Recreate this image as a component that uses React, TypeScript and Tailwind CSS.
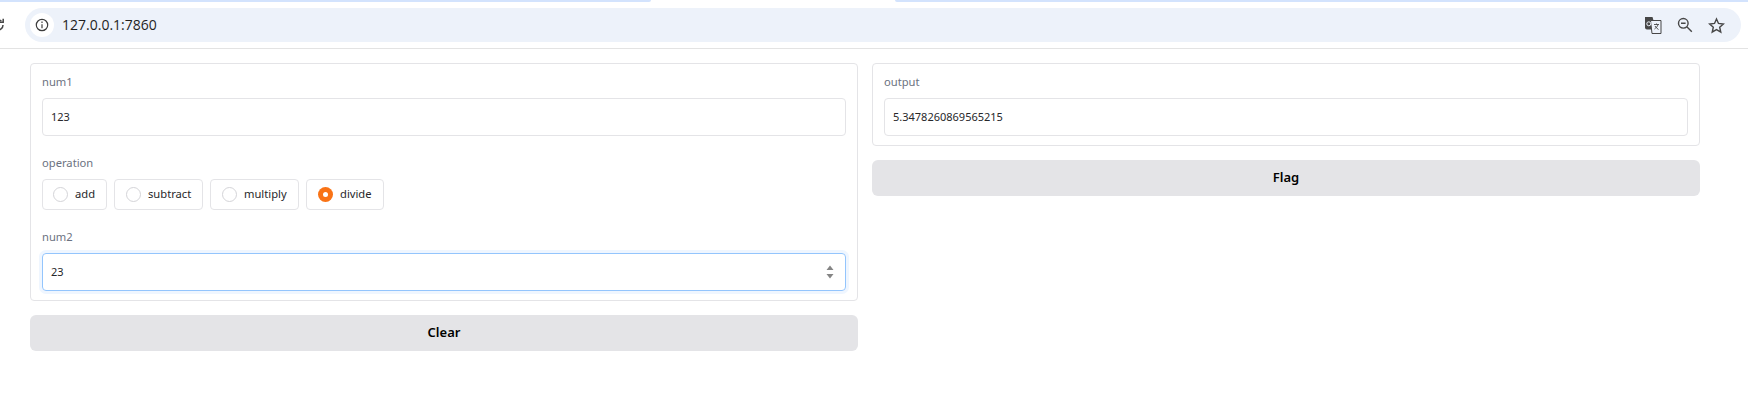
import React from "react";

const font = { fontFamily: '"Noto Sans", sans-serif' };

function Field({ label, value }: { label: string; value: string }) {
  return (
    <div className="flex flex-col">
      <div className="h-[24px] text-[11.2px] leading-[16px] text-[#6b7280]">{label}</div>
      <div className="flex h-[38px] items-center rounded-[4px] border border-[#e4e4e7] pl-[8px] pr-[9px] text-[11px] text-[#27272a]">{value}</div>
    </div>
  );
}

function Radio({ label, checked, w, pl }: { label: string; checked?: boolean; w: string; pl: string }) {
  return (
    <div className={`flex h-[31px] items-center rounded-[4px] border border-[#e4e4e7] text-[11.200px] text-[#27272a] ${w} ${pl}`}>
      {checked ? (
        <span className="flex h-[15px] w-[15px] items-center justify-center rounded-full bg-[#f97316]">
          <span className="h-[5px] w-[5px] rounded-full bg-white" />
        </span>
      ) : (
        <span className="h-[15px] w-[15px] rounded-full border border-[#d4d4d8] bg-white" />
      )}
      <span className="ml-[7px]">{label}</span>
    </div>
  );
}

function Btn({ label }: { label: string }) {
  return (
    <div className="flex h-[36px] items-center justify-center rounded-[6px] bg-[#e4e4e7] text-[13px] font-semibold text-black">{label}</div>
  );
}

export default function App() {
  return (
    <div className="h-[409px] w-[1748px] overflow-hidden bg-white" style={font}>
      <div className="h-[49px] border-b border-[#e3e3e3]">
        <div className="flex h-[2px]">
          <div className="w-[651px] rounded-br-[4px] bg-[#d3e3fd]" />
          <div className="w-[244px]" />
          <div className="flex-1 rounded-bl-[4px] bg-[#d3e3fd]" />
        </div>
        <div className="mt-[6px] flex h-[34px]">
          <div className="flex w-[25px] items-center">
            <svg width="16" height="16" viewBox="0 0 16 16" className="-ml-[10px]" fill="none" stroke="#474747" strokeWidth="1.5">
              <path d="M13 8a5 5 0 1 1-1.6-3.7" />
              <path d="M13.2 1.8v3.4H9.8" />
            </svg>
          </div>
          <div className="flex w-[1716px] items-center rounded-full bg-[#edf2fa] pl-[5px] pr-[16px]">
            <div className="flex h-[24px] w-[24px] items-center justify-center rounded-full bg-white">
              <svg width="14" height="14" viewBox="0 0 14 14" fill="none" stroke="#3c3c3c" strokeWidth="1.2">
                <circle cx="7" cy="7" r="5.7" />
                <path d="M7 6.2v4M7 3.6v1.3" />
              </svg>
            </div>
            <span className="mb-[1px] ml-[8px] text-[14px] text-[#1f1f1f]" style={{ fontFamily: '"Open Sans", sans-serif' }}>127.0.0.1:7860</span>
            <div className="ml-auto flex items-center gap-[15px]">
              <svg width="18" height="18" viewBox="0 0 18 18">
                <path d="M1 1h7.5l1 3.5v9H3a2 2 0 0 1-2-2z" fill="#474747" />
                <path d="M6.5 4.5h10.5v13H8z" fill="#edf2fa" stroke="#474747" strokeWidth="1" />
                <circle cx="4.8" cy="7.8" r="2" fill="none" stroke="#edf2fa" strokeWidth="1" />
                <path d="M10 8.5h5M12.5 7.500v1M14 8.5c-.5 2-2 3.500-3.500 4.500M11 10c.7 1.300 2 2.500 3.500 3.500" fill="none" stroke="#474747" strokeWidth=".9" />
              </svg>
              <svg width="16" height="16" viewBox="0 0 16 16" fill="none" stroke="#474747" strokeWidth="1.4">
                <circle cx="6.300" cy="6.300" r="4.800" />
                <path d="M4 6.300h4.600M9.800 9.800l5 5" />
              </svg>
              <svg width="17" height="17" viewBox="0 0 24 24" fill="none" stroke="#474747" strokeWidth="2">
                <path d="M12 2.800l2.800 6.300 6.900.7-5.200 4.600 1.500 6.800-6-3.500-6 3.500 1.500-6.800-5.200-4.600 6.900-.7z" />
              </svg>
            </div>
          </div>
        </div>
      </div>

      <div className="ml-[30px] grid w-[1670px] grid-cols-2 items-start gap-[14px] pt-[14px]">
        <div className="flex flex-col gap-[14px]">
          <div className="flex h-[238px] flex-col rounded-[4px] border border-[#e4e4e7] px-[11px] pt-[10px]">
            <Field label="num1" value="123" />
            <div className="mt-[16px] h-[24px] pt-[3px] text-[11.200px] leading-[16px] text-[#6b7280]">operation</div>
            <div className="mt-[3px] flex gap-[7px]">
              <Radio label="add" w="w-[65px]" pl="pl-[10px]" />
              <Radio label="subtract" w="w-[89px]" pl="pl-[11px]" />
              <Radio label="multiply" w="w-[89px]" pl="pl-[11px]" />
              <Radio label="divide" checked w="w-[78px]" pl="pl-[11px]" />
            </div>
            <div className="mt-[17px] h-[24px] pt-[2px] text-[11.200px] leading-[16px] text-[#6b7280]">num2</div>
            <div className="mt-[2px] flex h-[38px] items-center justify-between rounded-[4px] border border-[#93c5fd] px-[8px] text-[11px] text-[#27272a] shadow-[0_0_0_3px_#eff6ff]">
              <span>23</span>
              <svg width="14" height="18" viewBox="0 0 14 18" fill="#858585">
                <path d="M7 2.500l3.500 4.500h-7zM7 15.500l-3.500-4.500h7z" />
              </svg>
            </div>
          </div>
          <Btn label="Clear" />
        </div>
        <div className="flex flex-col gap-[14px]">
          <div className="h-[83px] rounded-[4px] border border-[#e4e4e7] px-[11px] pt-[10px]">
            <Field label="output" value="5.3478260869565215" />
          </div>
          <Btn label="Flag" />
        </div>
      </div>
    </div>
  );
}
